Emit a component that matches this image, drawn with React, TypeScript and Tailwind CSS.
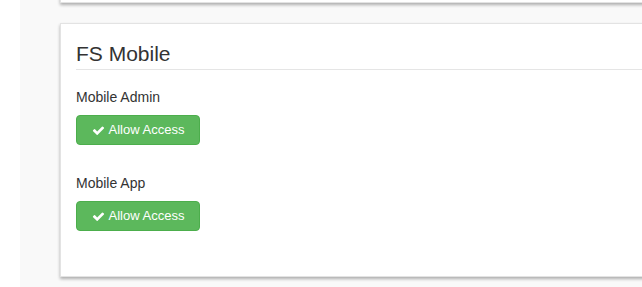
import React from 'react'

function CheckIcon() {
  return (
    <svg viewBox="0 0 1792 1792" className="w-[13px] h-[13px] fill-current" aria-hidden="true">
      <path d="M1671 566q0 40-28 68l-724 724-136 136q-28 28-68 28t-68-28l-136-136-362-362q-28-28-28-68t28-68l136-136q28-28 68-28t68 28l294 295 656-657q28-28 68-28t68 28l136 136q28 28 28 68z" />
    </svg>
  )
}

function AccessRow({ label, first }: { label: string; first?: boolean }) {
  return (
    <div className={first ? 'mt-[17px]' : 'mt-[28px]'}>
      <p className="text-[14px] leading-[20px] text-[#333]">{label}</p>
      <button className="mt-[8px] h-[30px] w-[124px] flex items-center justify-center gap-[4px] rounded-[4px] border border-[#4cae4c] bg-[#5cb85c] text-white text-[13px] leading-[18px]">
        <CheckIcon />
        <span>Allow Access</span>
      </button>
    </div>
  )
}

export default function App() {
  return (
    <div className="flex h-[287px] w-[642px] overflow-hidden bg-white" style={{ fontFamily: '"Liberation Sans", Arial, sans-serif' }}>
      {/* Left gutter */}
      <div className="w-[20px] flex-shrink-0 bg-white" />

      {/* Main content */}
      <div className="flex-1 bg-[#f9f9f9] pl-[40px]">
        {/* Previous panel (cut off) */}
        <div className="-mt-[40px] h-[43px] -mr-[20px] bg-white border border-[#e3e3e3] shadow-[0_2px_3px_rgba(0,0,0,0.3)]" />

        {/* FS Mobile panel */}
        <div className="mt-[20px] h-[254px] -mr-[20px] bg-white border border-[#e3e3e3] shadow-[0_2px_3px_rgba(0,0,0,0.3)] pl-[15px] pt-[18px]">
          <h2 className="text-[21px] leading-[23px] text-[#333] pb-[4px] border-b border-[#e5e5e5]">FS Mobile</h2>
          <AccessRow label="Mobile Admin" first />
          <AccessRow label="Mobile App" />
        </div>
      </div>
    </div>
  )
}
